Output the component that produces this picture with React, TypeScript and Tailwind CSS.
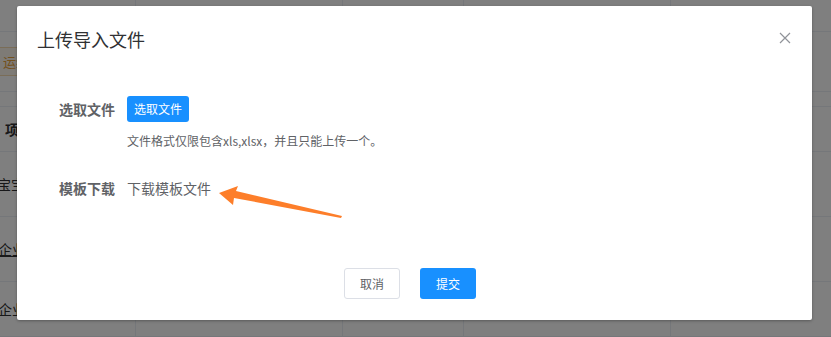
import React from "react";

const font = { fontFamily: '"Noto Sans CJK SC", "Noto Sans", sans-serif' };

type Row = { h: string; left?: React.ReactNode };

const rows: Row[] = [
  { h: "h-[32px]" },
  {
    h: "h-[60px]",
    left: (
      <span className="-ml-[4px] flex h-[29px] items-center border border-[#f5dab1] bg-[#fdf6ec] px-[6px] text-[13px] text-[#e6a23c]">
        运维
      </span>
    ),
  },
  { h: "h-[15px]" },
  {
    h: "h-[45px]",
    left: <span className="ml-[5px] text-[14px] font-bold text-[#303133]">项目</span>,
  },
  {
    h: "h-[65px]",
    left: <span className="-ml-[3px] text-[14px] text-[#303133]">宝宝</span>,
  },
  {
    h: "h-[65px]",
    left: <span className="-ml-[2px] text-[14px] text-[#303133] underline">企业</span>,
  },
  {
    h: "h-[55px]",
    left: <span className="-ml-[2px] text-[14px] text-[#303133]">企业</span>,
  },
];

function BackgroundTable() {
  return (
    <div className="flex flex-col bg-white">
      {rows.map((row, i) => (
        <div key={i} className={`flex ${row.h} border-b border-[#ebeef5]`}>
          <div className="flex w-[136px] items-center border-r border-[#ebeef5]">{row.left}</div>
          <div className="w-[207px] border-r border-[#ebeef5]" />
          <div className="w-[121px] border-r border-[#ebeef5]" />
          <div className="w-[207px] border-r border-[#ebeef5]" />
          <div className="flex-1" />
        </div>
      ))}
    </div>
  );
}

function CloseIcon() {
  return (
    <svg width="12" height="12" viewBox="0 0 12 12" fill="none">
      <path d="M1 1L11 11M11 1L1 11" stroke="#909399" strokeWidth="1.2" />
    </svg>
  );
}

export default function App() {
  return (
    <div className="relative h-[337px] w-[831px] overflow-hidden" style={font}>
      <BackgroundTable />

      {/* overlay + dialog */}
      <div className="absolute inset-0 bg-black/50 pl-[17px] pt-[6px]">
        <div className="relative flex h-[314px] w-[795px] flex-col rounded-[2px] bg-white shadow-[0_1px_3px_rgba(0,0,0,0.3)]">
          <div className="px-5 pb-[10px] pt-[21px]">
            <span className="text-[18px] leading-6 text-[#303133]">上传导入文件</span>
          </div>
          <button className="absolute right-[21px] top-[26px]">
            <CloseIcon />
          </button>

          <div className="px-5 pt-[34px]">
            <div className="flex items-start">
              <label className="w-[90px] pr-3 text-right text-[14px] font-bold leading-[26px] text-[#606266]">
                选取文件
              </label>
              <div className="flex flex-col">
                <button className="h-[26px] w-fit rounded-[3px] bg-[#1890ff] px-[7px] text-[12px] text-white">
                  选取文件
                </button>
                <div className="mt-[9px] text-[12px] leading-5 text-[#606266]">
                  文件格式仅限包含xls,xlsx，并且只能上传一个。
                </div>
              </div>
            </div>

            <div className="mt-[24px] flex items-center">
              <label className="w-[90px] pr-3 text-right text-[14px] font-bold leading-[26px] text-[#606266]">
                模板下载
              </label>
              <span className="text-[14px] leading-[26px] text-[#606266]">下载模板文件</span>
            </div>
          </div>

          <div className="mt-auto flex justify-center gap-5 pb-[21px] pr-[9px]">
            <button className="h-[31px] w-[56px] rounded-[3px] border border-[#dcdfe6] bg-white text-[12px] text-[#606266]">
              取消
            </button>
            <button className="h-[31px] w-[56px] rounded-[3px] bg-[#1890ff] text-[12px] text-white">
              提交
            </button>
          </div>
        </div>
      </div>

      {/* annotation arrow */}
      <svg
        className="pointer-events-none absolute left-0 top-0"
        width="831"
        height="337"
        viewBox="0 0 831 337"
      >
        <polygon
          points="219,193 238,186 236,191 342,216 341,218 234,198 233,205"
          fill="#fd7e2a"
        />
      </svg>
    </div>
  );
}
